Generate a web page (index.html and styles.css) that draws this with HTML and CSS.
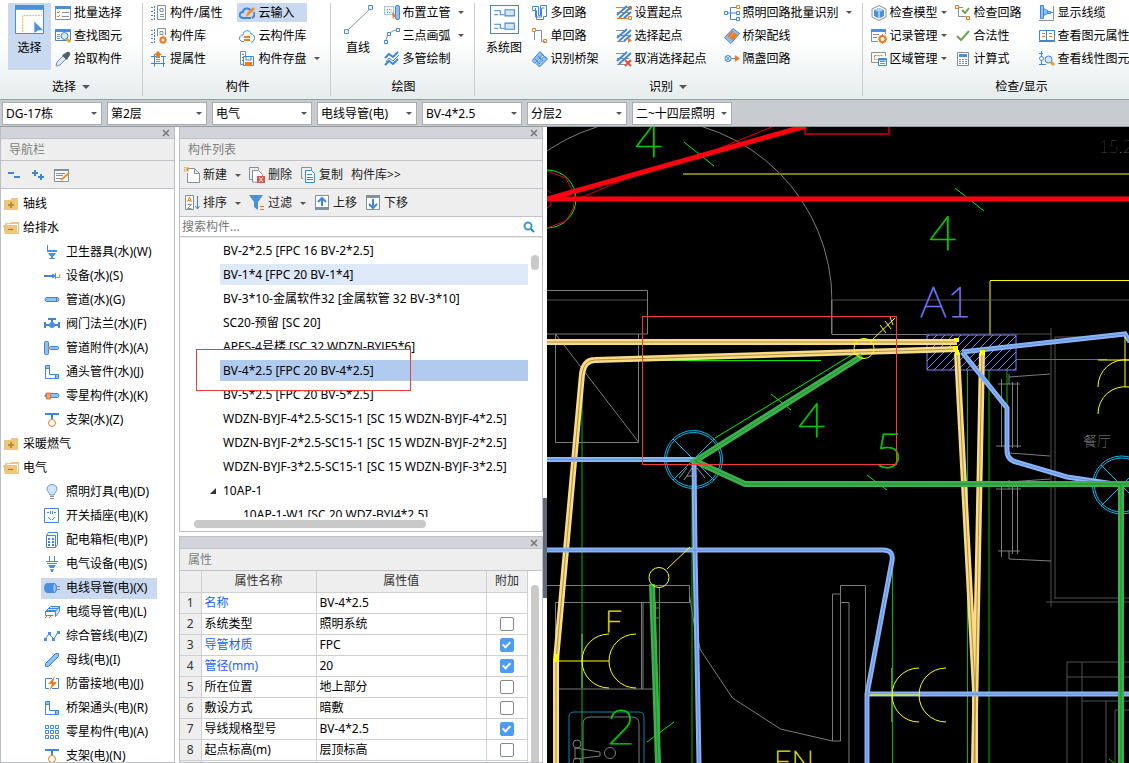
FILE: index.html
```html
<!DOCTYPE html>
<html lang="zh-CN">
<head>
    <meta charset="UTF-8">
    <meta name="viewport" content="width=device-width, initial-scale=1.0">
    <title>构件列表</title>
    <link rel="stylesheet" href="styles.css">
</head>
<body>
    <svg class="sprite" aria-hidden="true">
        <symbol id="i-select" viewBox="0 0 30 30"><path class="white" d="M.5 .5h29v29h-29z"/><path class="b" d="M.5 .5h29v29h-29z"/><path class="bf" d="M0 0h30v5H0z"/><path d="M8 28V11h20" fill="none" stroke="#f0b020" stroke-dasharray="2 1"/><path class="bf" d="M20 17l9 9h-5l-4 3z"/></symbol>
        <symbol id="i-batch" viewBox="0 0 16 16"><path class="g" d="M.5 2.500h15v12H.5z"/><path class="bf" d="M0 1h16v3H0z"/><path class="o" d="M2 7l1 1 2-2M2 11l1 1 2-2"/><path class="g" d="M7 7.500h7M7 11.500h7"/></symbol>
        <symbol id="i-find" viewBox="0 0 16 16"><path class="b" d="M.5 1.500h15v11H.5z"/><path class="bf" d="M0 1h16v3H0z"/><path class="g" d="M2 6.500h3M2 8.500h3M2 10.500h3"/><circle class="b lt" cx="9.500" cy="8" r="3.500"/><path class="y" d="M12 11l3 3"/></symbol>
        <symbol id="i-pick" viewBox="0 0 16 16"><path d="M1 15l1-4 6-6 3 3-6 6z" fill="#d9ebfb" stroke="#7893a8"/><path class="dark" d="M7 4l5 5 1-2 2-3c1-2-1-4-3-3L9 3z"/></symbol>
        <symbol id="i-prop" viewBox="0 0 16 16"><path class="b" d="M3.500 1v14M0 2.500h3M0 6.500h3M0 10.500h3M0 14.500h3" stroke-dasharray="2 1"/><path class="g" d="M6.500 .5h8v14h-8zM9 3.500h3v3H9zM9 9.500h4M9 11.500h4"/></symbol>
        <symbol id="i-lib" viewBox="0 0 16 16"><path class="b" d="M3.500 1v14M0 2.500h3M0 6.500h3M0 10.500h3M0 14.500h3" stroke-dasharray="2 1"/><path class="g" d="M6.500 8V.5h8V7M9 3.500h3v3H9z"/><circle class="o2" cx="12" cy="12" r="2.500"/><path class="o" d="M12 7.500V9M12 15v1M8 12h1M15 12h1M9.500 9.500l1 1M13.500 10.500l1-1M9.500 14.500l1-1"/></symbol>
        <symbol id="i-raise" viewBox="0 0 16 16"><path class="b" d="M3.500 3v12.500M0 12.500h14M0 5.500h5M12.500 5v11M10 5.500h5"/><path class="of" d="M7 0l4 4H9v3H5V4H3zM5 8h4v1H5zM5 10h4v1H5z"/></symbol>
        <symbol id="i-cloudpen" viewBox="0 0 16 16"><path class="b2" d="M12 13H4C-1 12 0 7 4 7c0-4 6-5 8-1M15 7c1 3 0 5-2 6"/><path d="M7 12l1-4 6-6 2 2-6 6z" fill="#f58a2c"/></symbol>
        <symbol id="i-cloudlib" viewBox="0 0 16 16"><path class="b" d="M5 13.500H3C-1 12 0 7 4 7c0-5 7-6 8-1 4 0 5 6 1 8h-1"/><path class="o2" d="M5 9h6M5 12h6"/></symbol>
        <symbol id="i-save" viewBox="0 0 16 16"><path class="g" d="M4 13.500H1.500V.5h5V5"/><path class="b" d="M3 3.500h2M3 6.500h1M3 9.500h1M4.500 5.500h10v9h-10z"/><path class="of" d="M6 11h7v4H6z"/><path class="b" d="M7 6v3h5V6"/></symbol>
        <symbol id="i-line" viewBox="0 0 30 30"><path class="g" d="M3 27L27 4"/><path class="b white" d="M.5 25.500h4v4h-4zM25.500 .5h4v4h-4z"/></symbol>
        <symbol id="i-riser" viewBox="0 0 16 16"><path class="b" d="M.5 1.500h9v8h-9zM3 4.500h4v3H3z" stroke-dasharray="1 1"/><rect class="b mid" x="11.500" y=".5" width="4" height="14" rx="1.500"/><path class="of" d="M8 7l5 4-3 1-1 3z"/></symbol>
        <symbol id="i-arc" viewBox="0 0 16 16"><path class="g" d="M2 14C2 7 7 2 14 2"/><path class="b white" d="M.5 12.500h3v3h-3zM3.500 4.500h3v3h-3zM12.500 .5h3v3h-3z"/></symbol>
        <symbol id="i-multi" viewBox="0 0 16 16"><path class="b2" d="M1 7l4-4 4 3 5-5M1 14l4-4 4 3 5-5"/><path class="b" d="M2 11l3-4 4 3 6-6"/></symbol>
        <symbol id="i-system" viewBox="0 0 28 28"><path class="b white" d="M.5 .5h27v27H.5z"/><path class="b lt" d="M14.500 4.500h9v6h-9zM14.500 17.500h9v6h-9z"/><path class="b" d="M4 5.500h6v4h4M4 9.500h4M4 18.500h6v4h4M4 22.500h4"/></symbol>
        <symbol id="i-loops" viewBox="0 0 16 16"><path class="b" d="M.5 4.500v-3h6v9h2V.5h6v11h-3v3h-7v-9h-4zM3.500 3v9h6v-9h3"/></symbol>
        <symbol id="i-loop" viewBox="0 0 16 16"><path class="g" d="M3 2.500h6.500v11H13M2.500 4v8"/><path class="o" d="M.5 .5h3v3h-3zM11.500 11.500h3v3h-3z"/></symbol>
        <symbol id="i-tray" viewBox="0 0 16 16"><path class="b mid" d="M8 .5l3 3-8 9-3-3zM12.500 5l3 3-8 8-3-3z"/><path class="b" d="M9 2l5 5M6 5l5 5M3 8l5 5"/></symbol>
        <symbol id="i-start" viewBox="0 0 16 16"><path class="o" d="M0 2.500h12M1 7.500h12M1 13.500h12M12.500 1.500h3v3h-3zM12.500 11.500h3v3h-3z"/><path class="b2" d="M1 10L11 1M3 13L15 2M8 13l7-6"/></symbol>
        <symbol id="i-startsel" viewBox="0 0 16 16"><path class="g" d="M0 2.500h8M1 7.500h12M1 13.500h8"/><path class="b2" d="M1 10L11 1M3 13L15 2M8 13l7-6"/><path class="of" d="M12 9l4 4-3 1-1 2z"/></symbol>
        <symbol id="i-startdel" viewBox="0 0 16 16"><path class="g" d="M0 2.500h8M1 7.500h12M1 13.500h8"/><path class="b2" d="M1 10L11 1M3 13L15 2"/><path d="M9 9l6 6M15 9l-6 6" stroke="#e05040" stroke-width="2"/></symbol>
        <symbol id="i-light" viewBox="0 0 16 16"><path class="b" d="M.5 6.500h3v3h-3zM3.500 8H12M6.500 2.500v12M6.500 2.500H12M6.500 14.500H12M12.500 6.500h3v3h-3zM12.500 12.500h3v3h-3z"/><path class="o" d="M12.500 .5h3v3h-3z"/></symbol>
        <symbol id="i-wiring" viewBox="0 0 16 16"><path class="b mid" d="M9 .5l6.500 5L7 15.500l-6.500-6z"/><path class="o2" d="M9 3L4 9M11 5l-5 6M13 6l-5 6"/></symbol>
        <symbol id="i-skip" viewBox="0 0 16 16"><circle class="b" cx="4" cy="7.500" r="3"/><path class="b" d="M2 5l4 5M6 5l-4 5M7 7.500h4"/><path class="of" d="M11 4l5 3.500-5 3.500z"/></symbol>
        <symbol id="i-model" viewBox="0 0 16 16"><path class="g" d="M8 .5l7 3.500v8l-7 3.500L1 12V4z"/><path class="bf" d="M8 3l5 2v6l-5 2.500L3 11V5z"/><path d="M3 5l5 2 5-2-5-2z" fill="#a9d0fa"/><path d="M8 7v6" stroke="#fff"/></symbol>
        <symbol id="i-record" viewBox="0 0 16 16"><path class="g" d="M7 13.500H.5v-12h14V6"/><path class="bf" d="M0 1h15v3H0z"/><path class="g" d="M2 6.500h6M2 9.500h4"/><circle class="o2" cx="11.500" cy="11" r="3"/><path class="o" d="M11.500 6v2M11.500 14v2M7 11h2M14 11h2M8.500 8l1.500 1M13 9l1.500-1M8.500 14l1.500-1M13 13l1.500 1"/></symbol>
        <symbol id="i-region" viewBox="0 0 16 16"><path class="g" d="M7 11.500H.5v-10h14V5"/><path class="o" d="M3.500 4.500h8M3.500 4.500v4h3" stroke-dasharray="2 1"/><path class="b white" d="M7.500 7.500h8v7h-8z"/><path class="b2" d="M8 8.500h7"/><path class="g" d="M9 10.500h5M9 12.500h5"/></symbol>
        <symbol id="i-checkloop" viewBox="0 0 16 16"><path class="g" d="M3.500 3v8.500H11M3 2.500h5"/><path class="o" d="M.5 .5h3v3h-3zM11.500 11.500h3v3h-3z"/><path class="gr" d="M7 5l3 3 4-5"/></symbol>
        <symbol id="i-legal" viewBox="0 0 16 16"><path d="M2 8l4 4 8-9" fill="none" stroke="#6aa553" stroke-width="2"/></symbol>
        <symbol id="i-calc" viewBox="0 0 16 16"><path class="g white" d="M2.500 1.500h11v13h-11z"/><path class="bf" d="M4 3h8v3H4z"/><path class="g" d="M4 8.500h8M4 10.500h8M4 12.500h8" stroke-dasharray="2 1"/></symbol>
        <symbol id="i-cable" viewBox="0 0 16 16"><path class="g" d="M0 15.500h14.500V1"/><path class="b mid" d="M1.500 .5h3v13h-3zM4.500 3.500l4 2v3l-4 2zM8.500 6.500h3v2h-3z"/><path class="b" d="M11 7.500h3"/></symbol>
        <symbol id="i-book" viewBox="0 0 16 16"><path class="b white" d="M.5 2.500h15v10H.5zM7.500 3v11"/><path class="o" d="M3 5.500h3M3 8.500h3M10 5.500h3M10 8.500h3"/><path class="b" d="M0 13.500h16"/></symbol>
        <symbol id="i-linear" viewBox="0 0 16 16"><path class="b" d="M2.500 0v14M0 2.500h4M0 13.500h7"/><circle class="b white" cx="2.500" cy="7.500" r="2"/><circle class="b lt" cx="9.500" cy="8.500" r="3.500"/><path class="y" d="M12 11l3 3"/></symbol>
        <symbol id="i-folder" viewBox="0 0 16 16"><path d="M1 4h6l2-2h6v12H1z" fill="#edc67c"/><path d="M8 6v6M5 9h6" stroke="#b98b32" stroke-width="2"/></symbol>
        <symbol id="i-open" viewBox="0 0 16 16"><path d="M2 3h5l1-1h8v12H2z" fill="#edc67c"/><path d="M4 4.500h10.500V13" fill="none" stroke="#fff"/><path d="M0 5h13l2 9H2z" fill="#edc67c"/><path d="M5 9.500h5" stroke="#a07828"/></symbol>
        <symbol id="i-basin" viewBox="0 0 16 16"><path class="b" d="M3.500 1v6"/><path class="bf" d="M3 6h10v2H3zM4 9h8l-2 3H6zM7 12h2v2h2v1H5v-1h2z"/></symbol>
        <symbol id="i-device" viewBox="0 0 16 16"><path class="b2" d="M0 8h12"/><path class="bf" d="M8 6h2v4H8zM11 5h1v6h-1z"/><path class="o" d="M12 9.500h3.500v-3"/></symbol>
        <symbol id="i-pipe" viewBox="0 0 16 16"><rect class="b mid" x="1" y="5.500" width="14" height="4" rx="2"/><path class="b" d="M12.500 6v4"/></symbol>
        <symbol id="i-valve" viewBox="0 0 16 16"><path class="b2" d="M4 3h8M8 3v6M0 9h16M1 6v6M15 6v6"/><circle class="bf" cx="8" cy="9" r="3"/></symbol>
        <symbol id="i-fitting" viewBox="0 0 16 16"><rect class="b mid" x=".5" y="1.500" width="4" height="13" rx="1"/><rect class="b mid" x="5.500" y="6.500" width="9" height="3" rx="1"/><path class="o" d="M4.500 6v4"/></symbol>
        <symbol id="i-elbow" viewBox="0 0 16 16"><path class="b" d="M1.500 2v12.500h12v-4H5.500V2z"/><path class="b mid" d="M1.500 1.500h4v3h-4zM11.500 10.500h3v4h-3z"/></symbol>
        <symbol id="i-part" viewBox="0 0 16 16"><rect class="b mid" x="1" y="5.500" width="14" height="4" rx="2"/><path d="M2.500 5v6h4V5z" fill="#f0a070" stroke="#e07830"/></symbol>
        <symbol id="i-hanger" viewBox="0 0 16 16"><path class="b2" d="M1 2h14M8 2v5"/><circle class="o" cx="8" cy="11" r="3.500"/></symbol>
        <symbol id="i-bulb" viewBox="0 0 16 16"><path d="M6 11C5 8 3 7 3 5c0-6 10-6 10 0 0 2-2 3-3 6z" fill="#cfe5fb" stroke="#6d9bc8"/><path class="g" d="M6 12.500h4M6 14.500h4"/></symbol>
        <symbol id="i-socket" viewBox="0 0 16 16"><path class="b" d="M.5 .5h14v14H.5zM3 4.500h2M6.500 3v3M8.500 3v3M10 4.500h2M4 9l3 3M11 9l-3 3"/></symbol>
        <symbol id="i-box" viewBox="0 0 16 16"><path class="b" d="M2.500 3.500h9v12h-9zM2.500 3.500l2-3h9v12l-2 3"/><path class="b2" d="M4 7h2M8 7h2M4 10h2M8 10h2M4 13h2M8 13h2"/></symbol>
        <symbol id="i-plug" viewBox="0 0 16 16"><path class="b" d="M5.500 0v5M10.500 0v5M2 5.500h12M3 7.500h10M7 15.500h2"/><path class="bf" d="M4 9h8l-2 3H6zM6 13h4l-1 2H7z"/></symbol>
        <symbol id="i-conduit" viewBox="0 0 16 16"><path class="bf" d="M3 3h8v10H3C-1 12-1 4 3 3z"/><ellipse class="b mid" cx="10.500" cy="8" rx="2" ry="4.500"/><path class="g" d="M12 6.500h4M12 9.500h4"/></symbol>
        <symbol id="i-tray2" viewBox="0 0 16 16"><path class="b lt" d="M1.500 7.500l5-5h9l-4 5zM11.500 7.500v5l4-5v-5"/><path class="b" d="M1.500 7.500v4h8M3 6.500h9M5 4.500h9"/><path class="o" d="M1 14l3-3M5 14l3-3"/></symbol>
        <symbol id="i-zig" viewBox="0 0 16 16"><path class="b" d="M1 11l4-5 5 5 4-7"/><path class="bf" d="M0 10h3v3H0zM4 4h3v3H4zM8 10h3v3H8zM13 3h3v3h-3z"/></symbol>
        <symbol id="i-bus" viewBox="0 0 16 16"><path class="b mid" d="M1.500 14.500v-3l10-10h3v3l-10 10z"/></symbol>
        <symbol id="i-bolt" viewBox="0 0 16 16"><path class="b" d="M8 2.500H1.500v10H5M12 2.500h2.500v10H8"/><path class="of" d="M11 0L4 8h4l-3 7 8-9H9z"/></symbol>
        <symbol id="i-grid" viewBox="0 0 16 16"><path class="b" d="M1.500 1.500h3v3h-3zM6.500 1.500h3v3h-3zM11.500 1.500h3v3h-3zM1.500 6.500h3v3h-3zM6.500 6.500h3v3h-3zM11.500 6.500h3v3h-3zM1.500 11.500h3v3h-3zM6.500 11.500h3v3h-3zM11.500 11.500h3v3h-3z"/></symbol>
        <symbol id="i-minus" viewBox="0 0 16 16"><path class="b2" d="M2 6h6M8 10h6"/></symbol>
        <symbol id="i-plus" viewBox="0 0 16 16"><path class="b2" d="M2 6h6M5 3v6M8 10h6M11 7v6"/></symbol>
        <symbol id="i-edit" viewBox="0 0 16 16"><path class="g white" d="M.5 2.500h14v12H.5z"/><path class="gf" d="M0 2h15v2H0z"/><path class="g" d="M2 6.500h9M2 8.500h7M2 11.500h5"/><path d="M7 13l8-7" stroke="#f58a2c" stroke-width="2"/></symbol>
        <symbol id="i-new" viewBox="0 0 16 16"><path class="g white" d="M3.500 4V1.500h7l5 5v9h-12V6M10.500 2v4.500H15"/><path d="M0 1h5M0 3h5M1 0v5M4 0v5" stroke="#f0a010" stroke-dasharray="1 1"/></symbol>
        <symbol id="i-delete" viewBox="0 0 16 16"><path class="g" d="M3 12.500H.5V.5h9V3"/><path class="g white" d="M3.500 15V3.500h6l4 4v8z"/><path fill="#d9534f" d="M8 9h8v7H8z"/><path d="M10 10l4 5M14 10l-4 5" stroke="#fff"/></symbol>
        <symbol id="i-copy" viewBox="0 0 16 16"><path class="g" d="M3 11.500H1.500V.5h10V3"/><path class="b white" d="M5.500 3.500h6l3 3v9h-9z"/><path class="b" d="M7 7.500h5M7 10.500h6M7 12.500h6"/></symbol>
        <symbol id="i-sort" viewBox="0 0 16 16"><path class="g white" d="M1.500 .5h8v14h-8z"/><path class="o" d="M3.500 7l2-5 2 5M4 5.500h3"/><path class="g" d="M3.500 9.500h4l-4 4h4"/><path class="b" d="M13.500 1v13M11 11l2.500 3 2-3"/></symbol>
        <symbol id="i-filter" viewBox="0 0 16 16"><path class="bf" d="M0 0h14L9 7v8l-4-3V7z"/><path class="o" d="M11 11.500h4M11 14.500h4"/></symbol>
        <symbol id="i-up" viewBox="0 0 16 16"><path class="g white" d="M1.500 .5h13v14h-13z"/><path class="gf" d="M1 12h14v3H1z"/><path class="b2" d="M8 11V4M4 7l4-4 4 4"/></symbol>
        <symbol id="i-down" viewBox="0 0 16 16"><path class="g white" d="M1.500 .5h13v14h-13z"/><path class="gf" d="M1 0h14v3H1z"/><path class="b2" d="M8 4v7M4 9l4 4 4-4"/></symbol>
        <symbol id="i-search" viewBox="0 0 12 12"><circle cx="5" cy="5" r="3.500" fill="none" stroke="#3c9bd0" stroke-width="2"/><path d="M8 8l3 3" stroke="#2a80c0" stroke-width="2"/></symbol>
        <symbol id="i-close" viewBox="0 0 8 8"><path d="M1 1l6 6M7 1L1 7" stroke="#777" stroke-width="1.500"/></symbol>
    </svg>

    <header class="ribbon">
        <section class="group group-select">
            <div class="group-body">
                <button class="big active"><svg class="icon-big"><use href="#i-select"/></svg>选择</button>
                <div class="col">
                    <button class="tool"><svg class="icon"><use href="#i-batch"/></svg>批量选择</button>
                    <button class="tool"><svg class="icon"><use href="#i-find"/></svg>查找图元</button>
                    <button class="tool"><svg class="icon"><use href="#i-pick"/></svg>拾取构件</button>
                </div>
            </div>
            <div class="group-title">选择<i class="caret"></i></div>
        </section>
        <section class="group group-part">
            <div class="group-body">
                <div class="col">
                    <button class="tool"><svg class="icon"><use href="#i-prop"/></svg>构件/属性</button>
                    <button class="tool"><svg class="icon"><use href="#i-lib"/></svg>构件库</button>
                    <button class="tool"><svg class="icon"><use href="#i-raise"/></svg>提属性</button>
                </div>
                <div class="col">
                    <button class="tool active"><svg class="icon"><use href="#i-cloudpen"/></svg>云输入</button>
                    <button class="tool"><svg class="icon"><use href="#i-cloudlib"/></svg>云构件库</button>
                    <button class="tool"><svg class="icon"><use href="#i-save"/></svg>构件存盘<i class="caret"></i></button>
                </div>
            </div>
            <div class="group-title">构件</div>
        </section>
        <section class="group group-draw">
            <div class="group-body">
                <button class="big"><svg class="icon-big"><use href="#i-line"/></svg>直线</button>
                <div class="col">
                    <button class="tool"><svg class="icon"><use href="#i-riser"/></svg>布置立管<i class="caret"></i></button>
                    <button class="tool"><svg class="icon"><use href="#i-arc"/></svg>三点画弧<i class="caret"></i></button>
                    <button class="tool"><svg class="icon"><use href="#i-multi"/></svg>多管绘制</button>
                </div>
            </div>
            <div class="group-title">绘图</div>
        </section>
        <section class="group group-detect">
            <div class="group-body">
                <button class="big"><svg class="icon-big"><use href="#i-system"/></svg>系统图</button>
                <div class="col">
                    <button class="tool"><svg class="icon"><use href="#i-loops"/></svg>多回路</button>
                    <button class="tool"><svg class="icon"><use href="#i-loop"/></svg>单回路</button>
                    <button class="tool"><svg class="icon"><use href="#i-tray"/></svg>识别桥架</button>
                </div>
                <div class="col">
                    <button class="tool"><svg class="icon"><use href="#i-start"/></svg>设置起点</button>
                    <button class="tool"><svg class="icon"><use href="#i-startsel"/></svg>选择起点</button>
                    <button class="tool"><svg class="icon"><use href="#i-startdel"/></svg>取消选择起点</button>
                </div>
                <div class="col">
                    <button class="tool"><svg class="icon"><use href="#i-light"/></svg>照明回路批量识别<i class="caret"></i></button>
                    <button class="tool"><svg class="icon"><use href="#i-wiring"/></svg>桥架配线</button>
                    <button class="tool"><svg class="icon"><use href="#i-skip"/></svg>隔盏回路</button>
                </div>
            </div>
            <div class="group-title">识别<i class="caret"></i></div>
        </section>
        <section class="group group-check">
            <div class="group-body">
                <div class="col tight">
                    <button class="tool"><svg class="icon"><use href="#i-model"/></svg>检查模型<i class="caret"></i></button>
                    <button class="tool"><svg class="icon"><use href="#i-record"/></svg>记录管理<i class="caret"></i></button>
                    <button class="tool"><svg class="icon"><use href="#i-region"/></svg>区域管理<i class="caret"></i></button>
                </div>
                <div class="col">
                    <button class="tool"><svg class="icon"><use href="#i-checkloop"/></svg>检查回路</button>
                    <button class="tool"><svg class="icon"><use href="#i-legal"/></svg>合法性</button>
                    <button class="tool"><svg class="icon"><use href="#i-calc"/></svg>计算式</button>
                </div>
                <div class="col">
                    <button class="tool"><svg class="icon"><use href="#i-cable"/></svg>显示线缆</button>
                    <button class="tool"><svg class="icon"><use href="#i-book"/></svg>查看图元属性</button>
                    <button class="tool"><svg class="icon"><use href="#i-linear"/></svg>查看线性图元</button>
                </div>
            </div>
            <div class="group-title">检查/显示</div>
        </section>
    </header>

    <div class="filters">
        <label class="combo"><select aria-label="楼栋"><option>DG-17栋</option></select></label>
        <label class="combo"><select aria-label="楼层"><option>第2层</option></select></label>
        <label class="combo"><select aria-label="专业"><option>电气</option></select></label>
        <label class="combo"><select aria-label="构件类型"><option>电线导管(电)</option></select></label>
        <label class="combo"><select aria-label="构件"><option>BV-4*2.5</option></select></label>
        <label class="combo"><select aria-label="分层"><option>分层2</option></select></label>
        <label class="combo"><select aria-label="图纸"><option>二~十四层照明</option></select></label>
    </div>

    <main class="workspace">
        <aside class="panel nav">
            <div class="panel-grip"><button class="close" aria-label="关闭"><svg><use href="#i-close"/></svg></button></div>
            <h2 class="panel-title">导航栏</h2>
            <div class="toolbar nav-tools">
                <button aria-label="折叠"><svg class="icon"><use href="#i-minus"/></svg></button>
                <button aria-label="展开"><svg class="icon"><use href="#i-plus"/></svg></button>
                <button aria-label="编辑"><svg class="icon"><use href="#i-edit"/></svg></button>
            </div>
            <ul class="tree">
                <li class="root"><svg class="icon"><use href="#i-folder"/></svg>轴线</li>
                <li class="root"><svg class="icon"><use href="#i-open"/></svg>给排水</li>
                <li><span><svg class="icon"><use href="#i-basin"/></svg>卫生器具(水)(W)</span></li>
                <li><span><svg class="icon"><use href="#i-device"/></svg>设备(水)(S)</span></li>
                <li><span><svg class="icon"><use href="#i-pipe"/></svg>管道(水)(G)</span></li>
                <li><span><svg class="icon"><use href="#i-valve"/></svg>阀门法兰(水)(F)</span></li>
                <li><span><svg class="icon"><use href="#i-fitting"/></svg>管道附件(水)(A)</span></li>
                <li><span><svg class="icon"><use href="#i-elbow"/></svg>通头管件(水)(J)</span></li>
                <li><span><svg class="icon"><use href="#i-part"/></svg>零星构件(水)(K)</span></li>
                <li><span><svg class="icon"><use href="#i-hanger"/></svg>支架(水)(Z)</span></li>
                <li class="root"><svg class="icon"><use href="#i-folder"/></svg>采暖燃气</li>
                <li class="root"><svg class="icon"><use href="#i-open"/></svg>电气</li>
                <li><span><svg class="icon"><use href="#i-bulb"/></svg>照明灯具(电)(D)</span></li>
                <li><span><svg class="icon"><use href="#i-socket"/></svg>开关插座(电)(K)</span></li>
                <li><span><svg class="icon"><use href="#i-box"/></svg>配电箱柜(电)(P)</span></li>
                <li><span><svg class="icon"><use href="#i-plug"/></svg>电气设备(电)(S)</span></li>
                <li class="selected"><span><svg class="icon"><use href="#i-conduit"/></svg>电线导管(电)(X)</span></li>
                <li><span><svg class="icon"><use href="#i-tray2"/></svg>电缆导管(电)(L)</span></li>
                <li><span><svg class="icon"><use href="#i-zig"/></svg>综合管线(电)(Z)</span></li>
                <li><span><svg class="icon"><use href="#i-bus"/></svg>母线(电)(I)</span></li>
                <li><span><svg class="icon"><use href="#i-bolt"/></svg>防雷接地(电)(J)</span></li>
                <li><span><svg class="icon"><use href="#i-elbow"/></svg>桥架通头(电)(R)</span></li>
                <li><span><svg class="icon"><use href="#i-grid"/></svg>零星构件(电)(A)</span></li>
                <li><span><svg class="icon"><use href="#i-hanger"/></svg>支架(电)(N)</span></li>
            </ul>
        </aside>

        <div class="middle">
            <section class="panel components">
                <div class="panel-grip"><button class="close" aria-label="关闭"><svg><use href="#i-close"/></svg></button></div>
                <h2 class="panel-title">构件列表</h2>
                <div class="toolbar">
                    <button><svg class="icon"><use href="#i-new"/></svg>新建<i class="caret"></i></button>
                    <button><svg class="icon"><use href="#i-delete"/></svg>删除</button>
                    <button><svg class="icon"><use href="#i-copy"/></svg>复制</button>
                    <button>构件库&gt;&gt;</button>
                </div>
                <div class="toolbar">
                    <button><svg class="icon"><use href="#i-sort"/></svg>排序<i class="caret"></i></button>
                    <button><svg class="icon"><use href="#i-filter"/></svg>过滤<i class="caret"></i></button>
                    <button><svg class="icon"><use href="#i-up"/></svg>上移</button>
                    <button><svg class="icon"><use href="#i-down"/></svg>下移</button>
                </div>
                <div class="search">
                    <input type="text" placeholder="搜索构件..." aria-label="搜索构件">
                    <svg><use href="#i-search"/></svg>
                </div>
                <div class="list-area">
                    <ul class="list">
                        <li><span>BV-2*2.5 [FPC 16 BV-2*2.5]</span></li>
                        <li class="hover"><span>BV-1*4 [FPC 20 BV-1*4]</span></li>
                        <li><span>BV-3*10-金属软件32 [金属软管 32 BV-3*10]</span></li>
                        <li><span>SC20-预留 [SC 20]</span></li>
                        <li><span>APES-4号楼 [SC 32 WDZN-BYJF5*6]</span></li>
                        <li class="selected marked"><span>BV-4*2.5 [FPC 20 BV-4*2.5]</span></li>
                        <li><span>BV-5*2.5 [FPC 20 BV-5*2.5]</span></li>
                        <li><span>WDZN-BYJF-4*2.5-SC15-1 [SC 15 WDZN-BYJF-4*2.5]</span></li>
                        <li><span>WDZN-BYJF-2*2.5-SC15-1 [SC 15 WDZN-BYJF-2*2.5]</span></li>
                        <li><span>WDZN-BYJF-3*2.5-SC15-1 [SC 15 WDZN-BYJF-3*2.5]</span></li>
                        <li class="parent"><span>10AP-1</span></li>
                        <li class="child"><span>10AP-1-W1 [SC 20 WDZ-BYJ4*2.5]</span></li>
                    </ul>
                    <div class="track-v"><div class="thumb"></div></div>
                </div>
                <div class="track-h"><div class="thumb"></div></div>
            </section>

            <section class="panel properties">
                <div class="panel-grip"><button class="close" aria-label="关闭"><svg><use href="#i-close"/></svg></button></div>
                <h2 class="panel-title">属性</h2>
                <div class="props">
                    <table>
                        <thead>
                            <tr><th class="num"></th><th class="name">属性名称</th><th class="value">属性值</th><th class="extra">附加</th></tr>
                        </thead>
                        <tbody>
                            <tr><th>1</th><td class="key">名称</td><td>BV-4*2.5</td><td></td></tr>
                            <tr><th>2</th><td>系统类型</td><td>照明系统</td><td class="tick"><input type="checkbox" aria-label="系统类型"></td></tr>
                            <tr><th>3</th><td class="key">导管材质</td><td>FPC</td><td class="tick"><input type="checkbox" aria-label="导管材质" checked></td></tr>
                            <tr><th>4</th><td class="key">管径(mm)</td><td>20</td><td class="tick"><input type="checkbox" aria-label="管径" checked></td></tr>
                            <tr><th>5</th><td>所在位置</td><td>地上部分</td><td class="tick"><input type="checkbox" aria-label="所在位置"></td></tr>
                            <tr><th>6</th><td>敷设方式</td><td>暗敷</td><td class="tick"><input type="checkbox" aria-label="敷设方式"></td></tr>
                            <tr><th>7</th><td>导线规格型号</td><td>BV-4*2.5</td><td class="tick"><input type="checkbox" aria-label="导线规格型号" checked></td></tr>
                            <tr><th>8</th><td>起点标高(m)</td><td>层顶标高</td><td class="tick"><input type="checkbox" aria-label="起点标高"></td></tr>
                            <tr><th></th><td></td><td></td><td></td></tr>
                        </tbody>
                    </table>
                    <div class="track-v"><div class="thumb"></div></div>
                </div>
            </section>
        </div>

        <div class="splitter"><button aria-label="收起"></button></div>

        <svg class="drawing" viewBox="547 127 582 636" preserveAspectRatio="xMinYMin slice">
            <defs>
                <pattern id="hatch" width="8" height="8" patternUnits="userSpaceOnUse"><path d="M-1 9L9-1M-1 1l2-2M7 9l2-2" stroke="#7d7dff" fill="none"/></pattern>
            </defs>

            <!-- walls and furniture -->
            <g class="wall">
                <circle cx="650" cy="301" r="182" clip-path="inset(0 0 50% 0)"/>
                <path d="M547 290.500h100.500v43.500H547M555.500 334v108.500h83V334M555.500 334l83 108M832 300v34.500h95M831.500 300v34"/>
                <path class="dim" d="M547 300h100M832 300h297M927 334h124M1051 328v279M1055 599V337h54M1055 598h74M1046 602h83"/>
                <path d="M1009 374v10M1009 377l41-3M998 384h22M1001.500 379v68M1012.500 382v66M1017.500 382v66M996 446h25M1009 453l41 3M1009 482l41-3M1009 480v9M996 489h25M1001.500 487v70M1012.500 487v67M1017.500 487v67M998 551h22M1009 551v8l42 2"/>
                <path d="M547 585.500h142.500v17H555.500v86.500h100V602M641.500 602v87M643 602v87M656 608h3M656 618h3"/>
                <path d="M689.500 595l5 32 6 23 32 48 48 31 52 12h8V585.500h25V690M832.500 741V594h8M840.500 602.500h8.500V763"/>
                <path class="dim" d="M1067 763V662h62M1082 662v101M1067 677h62M1082 701h47M1106 701v62M1115 763v-53h14"/>
                <path d="M583 763v-39q0-7 7-7h42q7 0 7 7v39M575 748l25 4v4l-25 3z"/>
                <circle cx="577" cy="744" r="4"/><circle cx="577" cy="762" r="4"/><circle cx="610" cy="753" r="5.500"/>
            </g>
            <path class="sink" d="M569 763v-46q0-5 5-5h65q5 0 5 5v46"/>
            <path class="sun" d="M687 468l-8 10M692 468l-8 12M697 468l8 10M687 476h10"/>

            <!-- thin reference lines -->
            <path class="olive" d="M683 174h446M990 281v54M582 634v54M892 668v54"/>
            <path class="lime" d="M684 142l30 24M955 188l29 23M660 360.500h161M860 350L715 438M771 394l20 16M867 475l20 15M647 742l27-20"/>
            <path class="leaf" d="M582 365v398M692 487v276M659.500 587v176M892.500 568v195M967.500 370v393M989 370v393M1007 370v40M1016 359.500h91M1109 759l5 4"/>

            <!-- red circuit -->
            <path class="maroon" d="M805 127v7h84v-7"/>
            <circle class="lime" cx="547" cy="199" r="29"/>
            <path class="red-thin" d="M547 171l19 7 9 18-2 13-7 12-19 7M580 198l62-26M700 156l72-29M547 190l4 3M547 208l4-3v-6"/>
            <path class="red" d="M547 199l259-73M547 199h582"/>

            <!-- distribution box -->
            <rect class="dist" x="927" y="335" width="89" height="35"/>

            <!-- lamps -->
            <g class="lamp">
                <circle cx="693.500" cy="459.500" r="29"/><circle cx="693.500" cy="459.500" r="27"/><path d="M673 439l41 41M714 439l-41 41"/>
                <circle cx="1121.500" cy="485" r="29"/><circle cx="1121.500" cy="485" r="27"/><path d="M1101 465l41 41M1142 465l-41 41"/>
            </g>

            <!-- conduits, drawn as a wide line with a dark core -->
            <g class="tan"><path id="t1" d="M547 342h410M958 349L595 360q-11 0-13 14L556 660v103M957 353l18 337v73M982 353l-8 410"/></g>
            <use class="tan-core" href="#t1"/>
            <g class="blue"><path id="b1" d="M547 459.500h147l1 91 4 212.500M547 550h336q11 0 9 11L867 694v69M867 694h262M962 352l45 56v42q0 10 9 12l51 15 54 8M962 352l163-18 5 8"/></g>
            <use class="blue-core" href="#b1"/>
            <g class="green"><path id="g1" d="M862 356L695 461l50 23h384M652 584l6 179M1121 485v278"/></g>
            <use class="green-core" href="#g1"/>

            <!-- switches and sockets -->
            <g class="yellow">
                <circle cx="864" cy="348.500" r="10"/><path d="M871 341l24-23M880 325l6 8M885 321l6 8M890 317l3 8M990 280.500h139"/>
                <circle cx="659" cy="577.500" r="10"/><path d="M667 569l23-22"/>
                <path d="M609 634a27 27 0 0 0 0 54M636 634a27 27 0 0 0 0 54M558 661h51"/>
                <path d="M919 668a27 27 0 0 0 0 54M946 668a27 27 0 0 0 0 54M870 695h49"/>
                <path d="M1098 387a27 27 0 0 1 31-27M1098 360h31M1098 414a27 27 0 0 1 31-27M1125 337v50"/>
            </g>
            <path class="dot" d="M954 338h5v4h-5zM953 346h5v4h-5zM955 350h4v5h-4zM980 350h5v5h-5zM554 654h5v8h-5z"/>

            <!-- labels -->
            <g class="cad">
                <text class="lime-text" x="635" y="157">4</text>
                <text class="lime-text" x="929" y="250">4</text>
                <text class="lime-text" x="798" y="437">4</text>
                <text class="lime-text" x="607" y="744">2</text>
                <text class="lime-text" x="875" y="468">5</text>
                <text class="violet-text" x="920" y="317">A1</text>
                <text class="gray-text" x="1099" y="153">15.2</text>
                <text class="gray-text cjk" x="1083" y="446">餐厅</text>
                <text class="yellow-text" x="605" y="632">F</text>
                <text class="yellow-text" x="774" y="772">EN</text>
            </g>

            <rect class="note" x="642.500" y="316.500" width="254" height="148"/>
        </svg>
    </main>
</body>
</html>
```

FILE: styles.css
```css
*,
*::before,
*::after {
    box-sizing: border-box;
}

body {
    margin: 0;
    height: 100vh;
    overflow: hidden;
    display: flex;
    flex-direction: column;
    background-color: #fff;
    color: #000;
    font-family: "Noto Sans", "Noto Sans CJK SC", sans-serif;
    font-size: 12px;
    line-height: 16px;
}

button,
select,
input {
    font: inherit;
    color: inherit;
    margin: 0;
}

button {
    border: none;
    background: none;
    padding: 0;
    white-space: nowrap;
}

ul {
    list-style: none;
    margin: 0;
    padding: 0;
}

.sprite {
    position: absolute;
    width: 0;
    height: 0;
}

.icon {
    width: 16px;
    height: 16px;
    flex: none;
}

/* icon strokes and fills */
.b { fill: none; stroke: #3f86d6; }
.b2 { fill: none; stroke: #3f86d6; stroke-width: 2; }
.bf { fill: #4a90dc; }
.g { fill: none; stroke: #82909a; }
.gf { fill: #82909a; }
.o { fill: none; stroke: #f07b1e; }
.o2 { fill: none; stroke: #f07b1e; stroke-width: 2; }
.of { fill: #f07b1e; }
.y { fill: none; stroke: #f0a010; stroke-width: 3; }
.gr { fill: none; stroke: #6aa553; stroke-width: 2; }
.dark { fill: #4f5d68; }
.lt { fill: #d5e6fa; }
.mid { fill: #8fc0f5; }
.white { fill: #fff; }

.caret {
    flex: none;
    width: 0;
    height: 0;
    border: 3px solid transparent;
    border-top-color: #555;
    border-bottom: none;
}

/* ribbon */
.ribbon {
    flex: none;
    display: flex;
    height: 100px;
    padding-top: 3px;
    background: linear-gradient(#fff 40%, #e6eded);
    border-bottom: 1px solid #959c9f;
    overflow: hidden;
}

.group {
    flex: none;
    position: relative;
    padding-right: 8px;
    border-right: 1px solid #c9cdd0;
    margin-bottom: 3px;
}

.group-select { padding-left: 8px; padding-right: 18px; }
.group-part { padding-left: 6px; }
.group-draw { padding-left: 6px; }
.group-detect { padding-left: 8px; }
.group-check { padding-left: 6px; min-width: 315px; border-right: none; }

.group-body {
    display: flex;
    height: 67px;
}

.group-title {
    display: flex;
    align-items: center;
    justify-content: center;
    gap: 6px;
    margin: 9px -5px 0 0;
}

.group-title .caret {
    border-width: 4px 4px 0;
}

.group-select .group-title {
    margin-right: -10px;
}

.group-detect .group-title {
    margin-right: 0;
}

.big {
    flex: none;
    width: 43px;
    display: flex;
    flex-direction: column;
    align-items: center;
    gap: 6px;
    padding-top: 2px;
    margin-right: 2px;
}

.icon-big {
    width: 29px;
    height: 29px;
}

.group-detect .big { margin-right: 4px; }

.active {
    background-color: #c9daf0;
}

.col {
    display: flex;
    flex-direction: column;
    align-items: flex-start;
    gap: 4px;
}

.col + .col {
    margin-left: 13px;
}

.col.tight + .col {
    margin-left: 4px;
}

.tool {
    display: flex;
    align-items: center;
    gap: 3px;
    height: 19px;
    min-width: 70px;
    padding: 0 2px;
}

.tool .caret {
    margin-left: 4px;
}

.tight .tool .caret {
    margin-left: 0;
}

/* combo boxes */
.filters {
    flex: none;
    display: flex;
    gap: 5px;
    padding: 2px 2px 1px;
    background-color: #c8cbd0;
    border-bottom: 1px solid #949b9f;
}

.combo {
    position: relative;
    width: 100px;
}

.combo select {
    appearance: none;
    display: block;
    width: 100%;
    height: 23px;
    padding: 1px 10px 0 3px;
    border: 1px solid #a8abaf;
    border-radius: 0;
    background-color: #fff;
}

.combo::after {
    content: "";
    position: absolute;
    right: 5px;
    top: 10px;
    border: 3px solid transparent;
    border-top-color: #555;
    border-bottom: none;
}

/* docked panels */
.workspace {
    flex: 1;
    min-height: 0;
    display: flex;
}

.panel {
    display: flex;
    flex-direction: column;
    border: 1px solid #bbbec4;
    border-top: none;
    background-color: #fff;
    overflow: hidden;
}

.nav {
    flex: none;
    width: 175px;
    margin-right: 4px;
}

.panel-grip {
    flex: none;
    height: 12px;
    display: flex;
    justify-content: flex-end;
    align-items: center;
    padding-right: 4px;
    background-color: #d2d4da;
    border-bottom: 1px solid #bfc2c7;
}

.close {
    display: flex;
}

.close svg {
    width: 8px;
    height: 8px;
}

.panel-title {
    flex: none;
    height: 22px;
    margin: 0;
    padding: 0 8px;
    font-size: 12px;
    font-weight: 400;
    line-height: 22px;
    color: #808080;
    background-color: #eee;
    border-bottom: 1px solid #bfc2c7;
}

.toolbar {
    flex: none;
    display: flex;
    align-items: center;
    gap: 8px;
    height: 28px;
    padding: 1px 0 0 4px;
    color: #222;
    background-color: #eee;
    border-bottom: 1px solid #bfc2c7;
}

.toolbar button {
    display: flex;
    align-items: center;
    gap: 3px;
}

.toolbar .caret {
    margin-left: 5px;
}

.nav-tools {
    padding: 0 0 0 5px;
}

.tree {
    padding-top: 3px;
}

.tree li {
    height: 24px;
    display: flex;
    align-items: center;
    padding-left: 40px;
    white-space: nowrap;
}

.tree .root {
    gap: 4px;
    padding-left: 2px;
}

.tree span {
    display: flex;
    align-items: center;
    gap: 6px;
    height: 21px;
    padding: 0 10px 0 3px;
}

.tree .selected span {
    background-color: #c9daf0;
}

.middle {
    flex: none;
    width: 364px;
    display: flex;
    flex-direction: column;
    gap: 4px;
}

.components {
    flex: none;
}

.search {
    flex: none;
    display: flex;
    align-items: center;
    height: 20px;
    padding-right: 7px;
    border-bottom: 1px solid #bfc2c7;
}

.search input {
    flex: 1;
    height: 18px;
    padding: 0 2px;
    border: none;
    outline: none;
}

.search input::placeholder {
    color: #777;
}

.search svg {
    width: 12px;
    height: 12px;
}

.list-area {
    display: flex;
    height: 280px;
    border-top: 1px solid #eee;
    overflow: hidden;
}

.list {
    flex: 1;
    padding-left: 40px;
}

.list li {
    position: relative;
    height: 24px;
    display: flex;
    align-items: center;
}

.list span {
    flex: 1;
    height: 21px;
    line-height: 21px;
    padding-left: 3px;
    white-space: nowrap;
}

.list .hover span {
    background-color: #dde8f8;
}

.list .selected span {
    position: relative;
    z-index: 2;
    background-color: #b0cbed;
}

.list .child {
    padding-left: 20px;
}

.list .marked::before,
.list .marked::after {
    content: "";
    position: absolute;
    z-index: 1;
    left: -24px;
    top: -9px;
    width: 215px;
    height: 42px;
    border: 1px solid #f43b3b;
    background-color: #fff;
}

.list .marked::after {
    z-index: 3;
    background: none;
}

.list .parent::before {
    content: "";
    position: absolute;
    left: -10px;
    top: 10px;
    border: 3px solid #333;
    border-left-color: transparent;
    border-top-color: transparent;
}

.track-v {
    flex: none;
    width: 14px;
    padding: 17px 3px 0;
}

.thumb {
    background-color: #c9c9c9;
    border-radius: 4px;
}

.list-area .thumb {
    height: 15px;
}

.track-h {
    height: 14px;
    padding: 3px 116px 3px 14px;
}

.track-h .thumb {
    height: 8px;
}

.properties {
    flex: 1;
    min-height: 0;
    border-top: 1px solid #bfc2c7;
}

.props {
    display: flex;
    flex: 1;
    min-height: 0;
}

.props .track-v {
    padding-top: 14px;
}

.props .thumb {
    height: 100%;
    border-radius: 4px 4px 0 0;
}

table {
    flex: 1;
    height: 0;
    table-layout: fixed;
    border-collapse: collapse;
}

th,
td {
    height: 21px;
    padding: 0 0 0 3px;
    font-weight: 400;
    line-height: 16px;
    text-align: left;
    border-right: 1px solid #d0d0d0;
    border-bottom: 1px solid #d0d0d0;
}

th {
    padding: 0;
    text-align: center;
    color: #333;
    background-color: #eee;
}

.num { width: 21px; }
.name { width: 115px; }
.extra { width: 41px; }

.key {
    color: #1b5fff;
}

.tick {
    padding: 0;
    text-align: center;
}

.tick input {
    appearance: none;
    display: block;
    position: relative;
    width: 14px;
    height: 14px;
    margin: 0 auto;
    border: 1px solid #888;
    border-radius: 2px;
    background-color: #fff;
}

.tick input:checked {
    border-color: #4d9df5;
    background-color: #4d9df5;
}

.tick input:checked::after {
    content: "";
    position: absolute;
    left: 3px;
    top: 1px;
    width: 5px;
    height: 8px;
    border: solid #fff;
    border-width: 0 2px 2px 0;
    transform: rotate(45deg);
}

.splitter {
    flex: none;
    width: 4px;
    display: flex;
    align-items: center;
}

.splitter button {
    width: 4px;
    height: 100px;
    margin-top: 206px;
    background-color: #5f6b78;
}

/* drawing area */
.drawing {
    flex: 1;
    min-width: 0;
    height: 100%;
    background-color: #000;
    fill: none;
}

.wall { stroke: #7c7c7c; }
.wall .dim { stroke: #505050; }
.sink { stroke: #1080b0; }
.sun { stroke: #999; }
.olive { stroke: #808000; stroke-width: 2; }
.lime { stroke: #00f000; }
.leaf { stroke: #00b800; }
.maroon { stroke: #a00010; stroke-width: 2; }
.red { stroke: #ff0010; stroke-width: 5; }
.red-thin { stroke: #e00010; }
.dist { fill: url(#hatch); stroke: #7d7dff; }
.lamp { stroke: #10b8f0; }
.tan { stroke: #fbdc82; stroke-width: 6; }
.tan-core { stroke: #a8904f; }
.blue { stroke: #8ab4fa; stroke-width: 5; }
.blue-core { stroke: #6690d0; }
.green { stroke: #3cb34a; stroke-width: 6; }
.green-core { stroke: #248a38; }
.yellow { stroke: #ffff00; }
.dot { fill: #ffff00; }
.note { stroke: #f43b3b; }

.cad text {
    font-family: Lato, "Noto Sans CJK SC", sans-serif;
    font-size: 48px;
    font-weight: 100;
    stroke-width: 1px;
}

.cad .lime-text { fill: #00e000; stroke: #00c800; }
.cad .violet-text { fill: #8080ff; stroke: #7070f0; font-size: 42px; }
.cad .gray-text {
    fill: #909090;
    font-family: "Liberation Sans Narrow", Lato, sans-serif;
    font-size: 17px;
}
.cad .cjk {
    font-family: "Noto Sans CJK SC", sans-serif;
    font-size: 14px;
}
.cad .yellow-text { fill: #f0f000; stroke: #d8d800; font-size: 30px; }
```
